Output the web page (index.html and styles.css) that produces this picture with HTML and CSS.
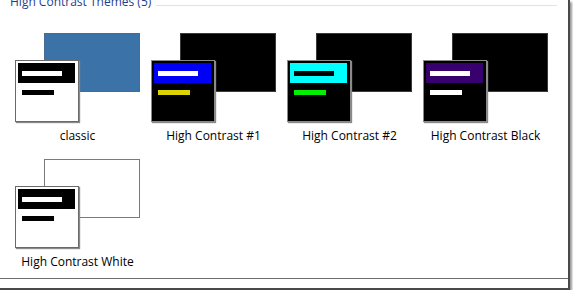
FILE: index.html
```html
<!DOCTYPE html>
<html>
<head>
<meta charset="utf-8">
<link rel="stylesheet" href="styles.css">
</head>
<body>
<div class="window">
  <div class="group-head">
    <span class="group-title">High Contrast Themes (5)</span>
    <span class="group-rule"></span>
  </div>
  <div class="grid">
    <div class="tile">
      <div class="preview">
        <div class="back back-classic"></div>
        <div class="front front-light">
          <div class="band band-black"><span class="bar bar-top bar-white"></span></div>
          <span class="bar bar-low bar-black"></span>
        </div>
      </div>
      <div class="label">classic</div>
    </div>
    <div class="tile">
      <div class="preview">
        <div class="back back-black"></div>
        <div class="front front-dark">
          <div class="band band-blue"><span class="bar bar-top bar-white"></span></div>
          <span class="bar bar-low bar-yellow"></span>
        </div>
      </div>
      <div class="label">High Contrast #1</div>
    </div>
    <div class="tile">
      <div class="preview">
        <div class="back back-black"></div>
        <div class="front front-dark">
          <div class="band band-cyan"><span class="bar bar-top bar-black"></span></div>
          <span class="bar bar-low bar-green"></span>
        </div>
      </div>
      <div class="label">High Contrast #2</div>
    </div>
    <div class="tile">
      <div class="preview">
        <div class="back back-black"></div>
        <div class="front front-dark">
          <div class="band band-purple"><span class="bar bar-top bar-white"></span></div>
          <span class="bar bar-low bar-white"></span>
        </div>
      </div>
      <div class="label">High Contrast Black</div>
    </div>
    <div class="tile">
      <div class="preview">
        <div class="back back-white"></div>
        <div class="front front-light">
          <div class="band band-black"><span class="bar bar-top bar-white"></span></div>
          <span class="bar bar-low bar-black"></span>
        </div>
      </div>
      <div class="label">High Contrast White</div>
    </div>
  </div>
  <div class="separator"></div>
</div>
</body>
</html>
```

FILE: styles.css
```css
html, body {
  margin: 0;
  padding: 0;
  background: #ffffff;
}

.window {
  position: relative;
  width: 568px;
  height: 288px;
  border-right: 2px solid #4a4a4a;
  border-bottom: 2px solid #4a4a4a;
  box-shadow: 2px 2px 2px #9a9a9a;
  background: #ffffff;
  font-family: "Open Sans", "Noto Sans", "Liberation Sans", sans-serif;
  overflow: hidden;
}

.group-head {
  display: flex;
  align-items: center;
  height: 10px;
  padding-left: 10px;
  padding-right: 11px;
}

.group-title {
  font-size: 12px;
  line-height: 16px;
  color: #1f3d8f;
  margin-top: -7px;
  white-space: nowrap;
}

.group-rule {
  flex: 1;
  height: 1px;
  background: #dde3e8;
  margin-left: 5px;
  margin-top: 0px;
}

.grid {
  display: grid;
  grid-template-columns: repeat(4, 125px);
  column-gap: 11px;
  row-gap: 0;
  padding-left: 15px;
  padding-top: 23px;
}

.tile {
  display: flex;
  flex-direction: column;
  align-items: center;
  width: 125px;
  height: 126px;
}

.preview {
  position: relative;
  width: 125px;
  height: 89px;
}

.back {
  position: absolute;
  left: 29px;
  top: 0;
  width: 94px;
  height: 57px;
  border: 1px solid #555;
}

.back-classic {
  background: #3b72a8;
  border-color: #4a6a8f;
}

.back-black {
  background: #000000;
  border-color: #3a3a3a;
}

.back-white {
  background: #ffffff;
  border-color: #7a7a7a;
}

.front {
  position: absolute;
  left: 0;
  top: 27px;
  width: 57px;
  height: 56px;
  padding: 2px 3px 2px 2px;
  border: 1px solid #6a6a6a;
  box-shadow: 1px 1px 1px #8a8a8a;
}

.front-light {
  background: #ffffff;
}

.front-dark {
  background: #000000;
  border-color: #8a8a8a;
}

.band {
  display: flex;
  align-items: center;
  height: 20px;
  padding-left: 4px;
}

.band-black { background: #000000; }
.band-blue { background: #0000f6; }
.band-cyan { background: #00ffff; }
.band-purple { background: #38006f; }

.bar {
  display: block;
  height: 5px;
}

.bar-top {
  width: 40px;
}

.bar-low {
  width: 32px;
  margin-top: 7px;
  margin-left: 4px;
}

.bar-white { background: #ffffff; }
.bar-black { background: #000000; }
.bar-yellow { background: #dcd400; }
.bar-green { background: #00f000; }

.label {
  margin-top: 6px;
  font-size: 12px;
  line-height: 16px;
  color: #000000;
  white-space: nowrap;
}

.separator {
  position: absolute;
  left: 0;
  right: 0;
  top: 278px;
  height: 1px;
  background: #6e6e6e;
}
```
